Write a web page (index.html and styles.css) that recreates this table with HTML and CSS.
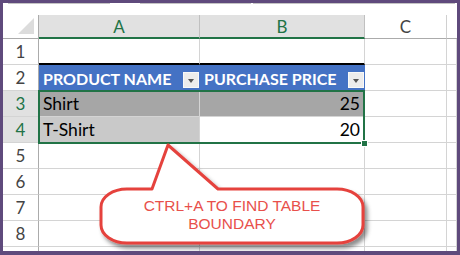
FILE: index.html
```html
<!DOCTYPE html>
<html lang="en">
<head>
    <meta charset="UTF-8">
    <title>Table Boundary</title>
    <link rel="stylesheet" href="styles.css">
</head>
<body>

    <div class="frame">
        <div class="sheet">
            <!-- formula bar edges peeking above the grid -->
            <div class="formula-strip">
                <div class="fbox name-box"></div>
                <div class="fbox fx-box"></div>
                <div class="fbox input-box"></div>
            </div>

            <div class="grid">
                <div class="corner"><span class="corner-tri"></span></div>
                <div class="col-head sel">A</div>
                <div class="col-head sel">B</div>
                <div class="col-head">C</div>
                <div class="col-head last"></div>

                <div class="row-head">1</div>
                <div class="cell above-table"></div>
                <div class="cell above-table"></div>
                <div class="cell"></div>
                <div class="cell"></div>

                <div class="row-head">2</div>
                <div class="cell th">PRODUCT NAME<span class="filter"></span></div>
                <div class="cell th">PURCHASE PRICE<span class="filter"></span></div>
                <div class="cell"></div>
                <div class="cell"></div>

                <div class="row-head sel">3</div>
                <div class="cell dark">Shirt</div>
                <div class="cell dark num">25</div>
                <div class="cell"></div>
                <div class="cell"></div>

                <div class="row-head sel">4</div>
                <div class="cell light">T-Shirt</div>
                <div class="cell num">20</div>
                <div class="cell"></div>
                <div class="cell"></div>

                <div class="row-head">5</div>
                <div class="cell"></div><div class="cell"></div><div class="cell"></div><div class="cell"></div>
                <div class="row-head">6</div>
                <div class="cell"></div><div class="cell"></div><div class="cell"></div><div class="cell"></div>
                <div class="row-head">7</div>
                <div class="cell"></div><div class="cell"></div><div class="cell"></div><div class="cell"></div>
                <div class="row-head">8</div>
                <div class="cell"></div><div class="cell"></div><div class="cell"></div><div class="cell"></div>
                <!-- row 9 only shows its top edge -->
                <div class="row-head"></div>
                <div class="cell"></div><div class="cell"></div><div class="cell"></div><div class="cell"></div>
            </div>

            <!-- selected range A3:B4 -->
            <div class="selection"></div>
            <div class="fill-handle"></div>

            <!-- callout bubble -->
            <svg class="callout" width="280" height="112" viewBox="0 0 280 112">
                <defs>
                    <filter id="shade" x="-10%" y="-10%" width="130%" height="140%">
                        <feDropShadow dx="3" dy="4" stdDeviation="2" flood-color="#000" flood-opacity="0.45"/>
                    </filter>
                </defs>
                <path d="M 32 49 L 57 49 L 73 5 L 123 49 L 242 49 A 26 18 0 0 1 268 67 L 268 85 A 26 18 0 0 1 242 103 L 32 103 A 26 18 0 0 1 6 85 L 6 67 A 26 18 0 0 1 32 49 Z"
                      fill="#fff" stroke="#e5423d" stroke-width="3" stroke-linejoin="round" filter="url(#shade)"/>
            </svg>
            <div class="callout-text">CTRL+A TO FIND TABLE<br>BOUNDARY</div>
        </div>
    </div>

</body>
</html>
```

FILE: styles.css
```css
body {
    margin: 0;
    font-family: 'Liberation Sans', Arial, sans-serif;
}
.frame {
    width: 460px;
    height: 255px;
    box-sizing: border-box;
    padding: 3px 3px 4px 3px;
    background-color: #5f4a7c;
}
.sheet {
    position: relative;
    height: 100%;
    background-color: #ffffff;
    overflow: hidden;
}
.formula-strip {
    height: 12px;
    display: flex;
}
.fbox {
    height: 1px;
    border: 1px solid #c4c4c4;
    border-top: none;
    margin-top: -1px;
}
.name-box {
    margin-left: 5px;
    width: 100px;
}
.fx-box {
    margin-left: 30px;
    width: 109px;
}
.input-box {
    margin-left: 2px;
    width: 200px;
}
.grid {
    display: grid;
    grid-template-columns: 36px 161px 165px 82px 10px;
    grid-template-rows: 24px repeat(9, 26px);
    font-family: Lato, 'Liberation Sans', sans-serif;
}
.grid > div {
    box-sizing: border-box;
}
.corner {
    position: relative;
    border-right: 1px solid #ababab;
    border-bottom: 1px solid #ababab;
}
.corner-tri {
    position: absolute;
    right: 4px;
    bottom: 4px;
    width: 0;
    height: 0;
    border-left: 16px solid transparent;
    border-bottom: 16px solid #dcdcdc;
}
.col-head {
    display: flex;
    align-items: center;
    justify-content: center;
    font-size: 17px;
    color: #444;
    border-right: 1px solid #d0d0d0;
    border-bottom: 1px solid #ababab;
}
.col-head.sel {
    background-color: #e1e1e1;
    color: #217346;
    border-right-color: #c0c0c0;
    border-bottom: 2px solid #217346;
}
.col-head.last {
    border-right: none;
}
.row-head {
    display: flex;
    align-items: center;
    justify-content: center;
    font-size: 17px;
    color: #444;
    border-right: 1px solid #ababab;
    border-bottom: 1px solid #d4d4d4;
}
.row-head.sel {
    background-color: #e1e1e1;
    color: #217346;
}
.cell {
    display: flex;
    align-items: center;
    font-size: 17.5px;
    color: #000;
    padding: 0 4px;
    border-right: 1px solid #d4d4d4;
    border-bottom: 1px solid #d4d4d4;
}
.cell.above-table {
    border-bottom: 2px solid #000;
}
.cell.th {
    background-color: #4472c4;
    color: #ffffff;
    font-size: 16px;
    font-weight: bold;
    justify-content: space-between;
    padding: 1px 1px 0 4px;
    border-right: none;
    border-bottom: none;
}
.filter {
    position: relative;
    flex-shrink: 0;
    width: 16px;
    height: 16px;
    box-sizing: border-box;
    background-color: #ececec;
    border: 1px solid #f8f8f8;
    margin-top: 2px;
}
.filter::after {
    content: "";
    position: absolute;
    left: 4px;
    top: 6px;
    border-left: 3.5px solid transparent;
    border-right: 3.5px solid transparent;
    border-top: 4px solid #555;
}
.cell.dark {
    background-color: #a6a6a6;
}
.cell.light {
    background-color: #c9c9c9;
}
.cell.num {
    justify-content: flex-end;
}
.selection {
    position: absolute;
    left: 35px;
    top: 87px;
    width: 327px;
    height: 54px;
    box-sizing: border-box;
    border: 2px solid #217346;
}
.fill-handle {
    position: absolute;
    left: 358px;
    top: 137px;
    width: 5px;
    height: 5px;
    background-color: #217346;
    border: 1px solid #ffffff;
}
.callout {
    position: absolute;
    left: 92px;
    top: 137px;
}
.callout-text {
    position: absolute;
    left: 98px;
    top: 194px;
    width: 262px;
    text-align: center;
    font-size: 15.5px;
    line-height: 18px;
    color: #e8504b;
}
```
